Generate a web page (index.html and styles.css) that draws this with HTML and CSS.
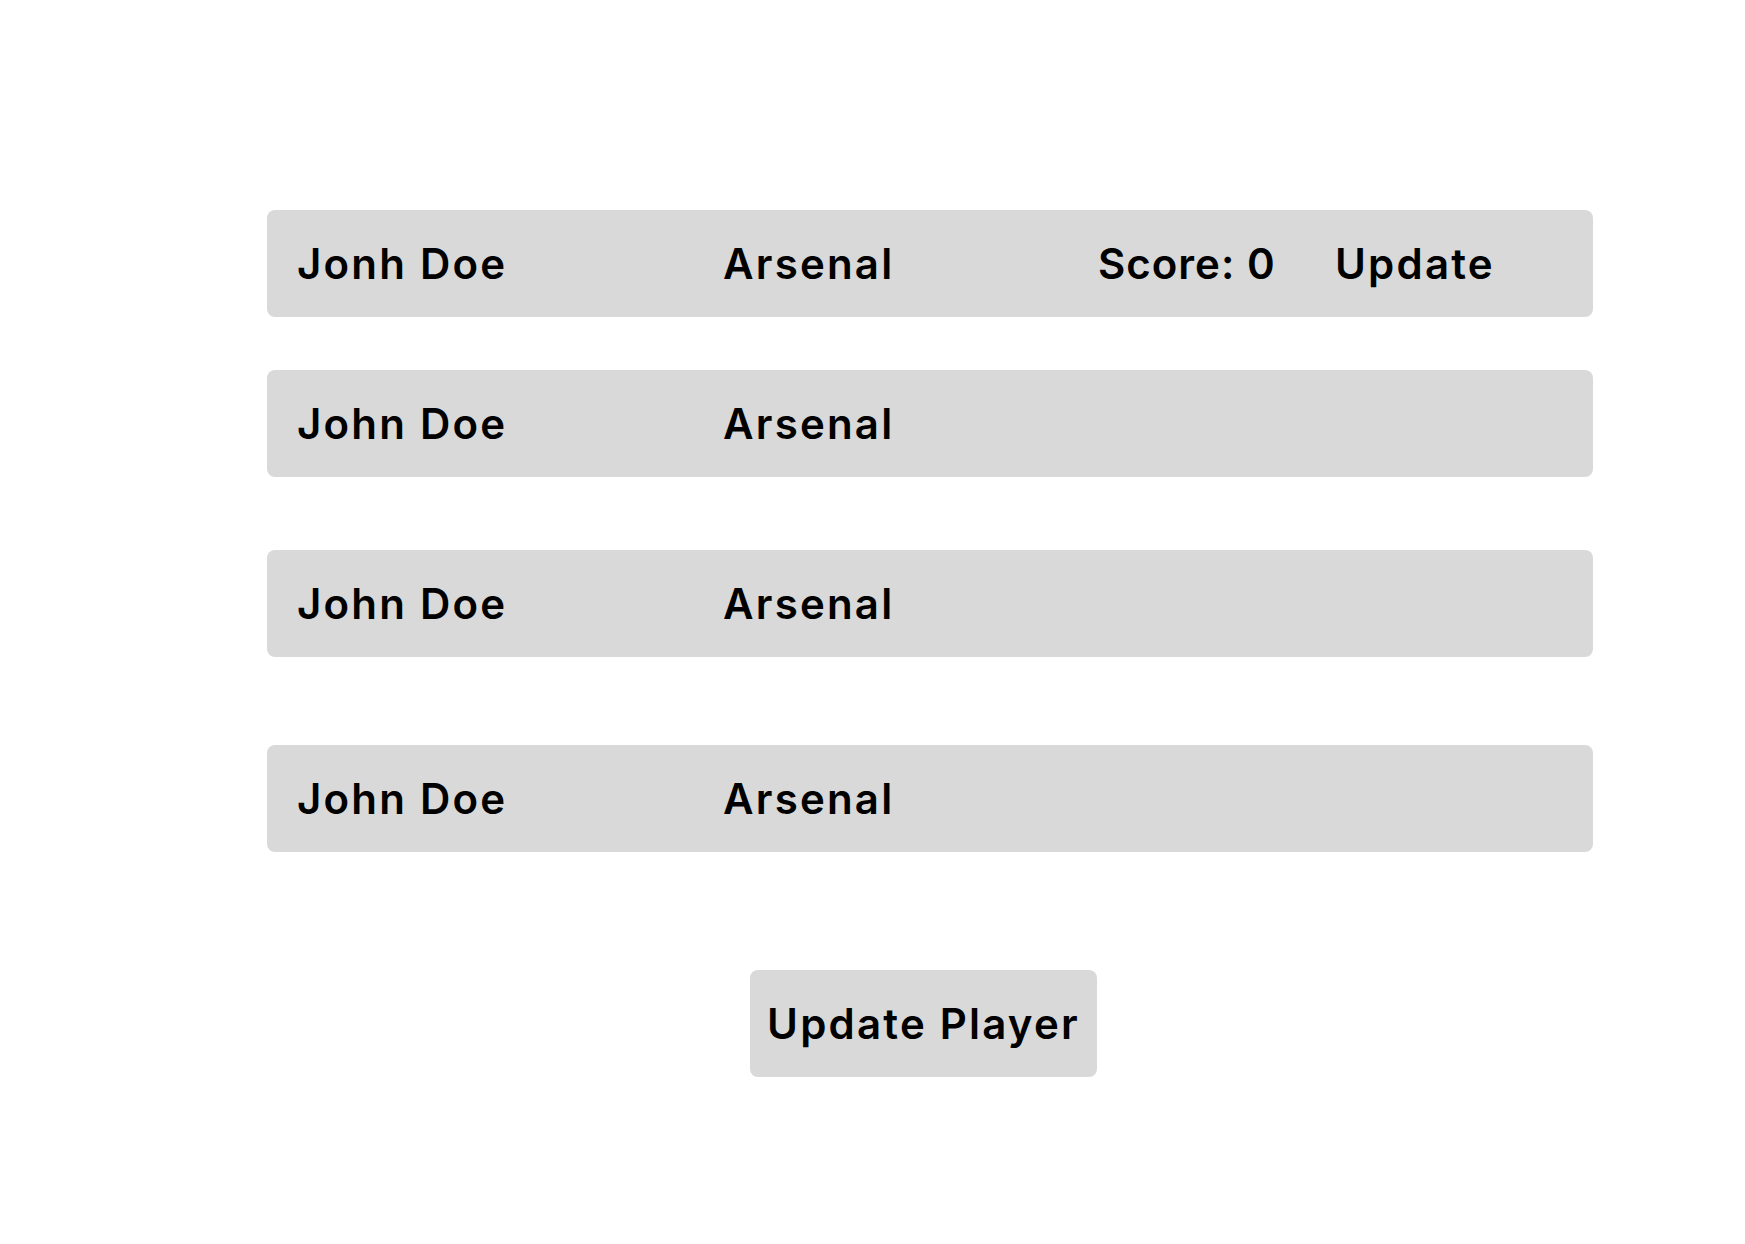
FILE: index.html
```html
<!DOCTYPE html>
<html lang="en">
<head>
<meta charset="utf-8">
<title>Players</title>
<link rel="stylesheet" href="styles.css">
</head>
<body>
<main class="board">
  <div class="row row-first">
    <span class="cell name">Jonh Doe</span>
    <span class="cell team">Arsenal</span>
    <span class="cell score">Score: 0</span>
    <span class="cell action">Update</span>
  </div>
  <div class="row row-second">
    <span class="cell name">John Doe</span>
    <span class="cell team">Arsenal</span>
  </div>
  <div class="row row-third">
    <span class="cell name">John Doe</span>
    <span class="cell team">Arsenal</span>
  </div>
  <div class="row row-fourth">
    <span class="cell name">John Doe</span>
    <span class="cell team">Arsenal</span>
  </div>
  <button class="update-btn" type="button">Update Player</button>
</main>
</body>
</html>
```

FILE: styles.css
```css
html, body {
  margin: 0;
  padding: 0;
  background: #ffffff;
}

body {
  font-family: Inter, "Open Sans", "Liberation Sans", sans-serif;
  color: #000000;
}

.board {
  display: flex;
  flex-direction: column;
  align-items: flex-start;
  padding: 210px 0 0 267px;
}

.row {
  box-sizing: border-box;
  width: 1326px;
  height: 107px;
  background: #d9d9d9;
  border-radius: 8px;
  display: grid;
  grid-template-columns: 426px 375px 239px 1fr;
  align-items: center;
  padding-left: 30px;
}

.row-second { margin-top: 53px; }
.row-third { margin-top: 73px; }
.row-fourth { margin-top: 88px; }

.cell {
  font-size: 42px;
  font-weight: 600;
  letter-spacing: 2.2px;
  line-height: 1;
  white-space: nowrap;
}

.score {
  letter-spacing: 1px;
}

.action {
  margin-left: -2px;
}

.update-btn {
  margin-top: 118px;
  margin-left: 483px;
  width: 347px;
  height: 107px;
  border: none;
  border-radius: 8px;
  background: #d9d9d9;
  color: #000000;
  font-family: Inter, "Open Sans", "Liberation Sans", sans-serif;
  font-size: 42px;
  font-weight: 600;
  letter-spacing: 2.2px;
  padding: 0;
  cursor: pointer;
}
```
